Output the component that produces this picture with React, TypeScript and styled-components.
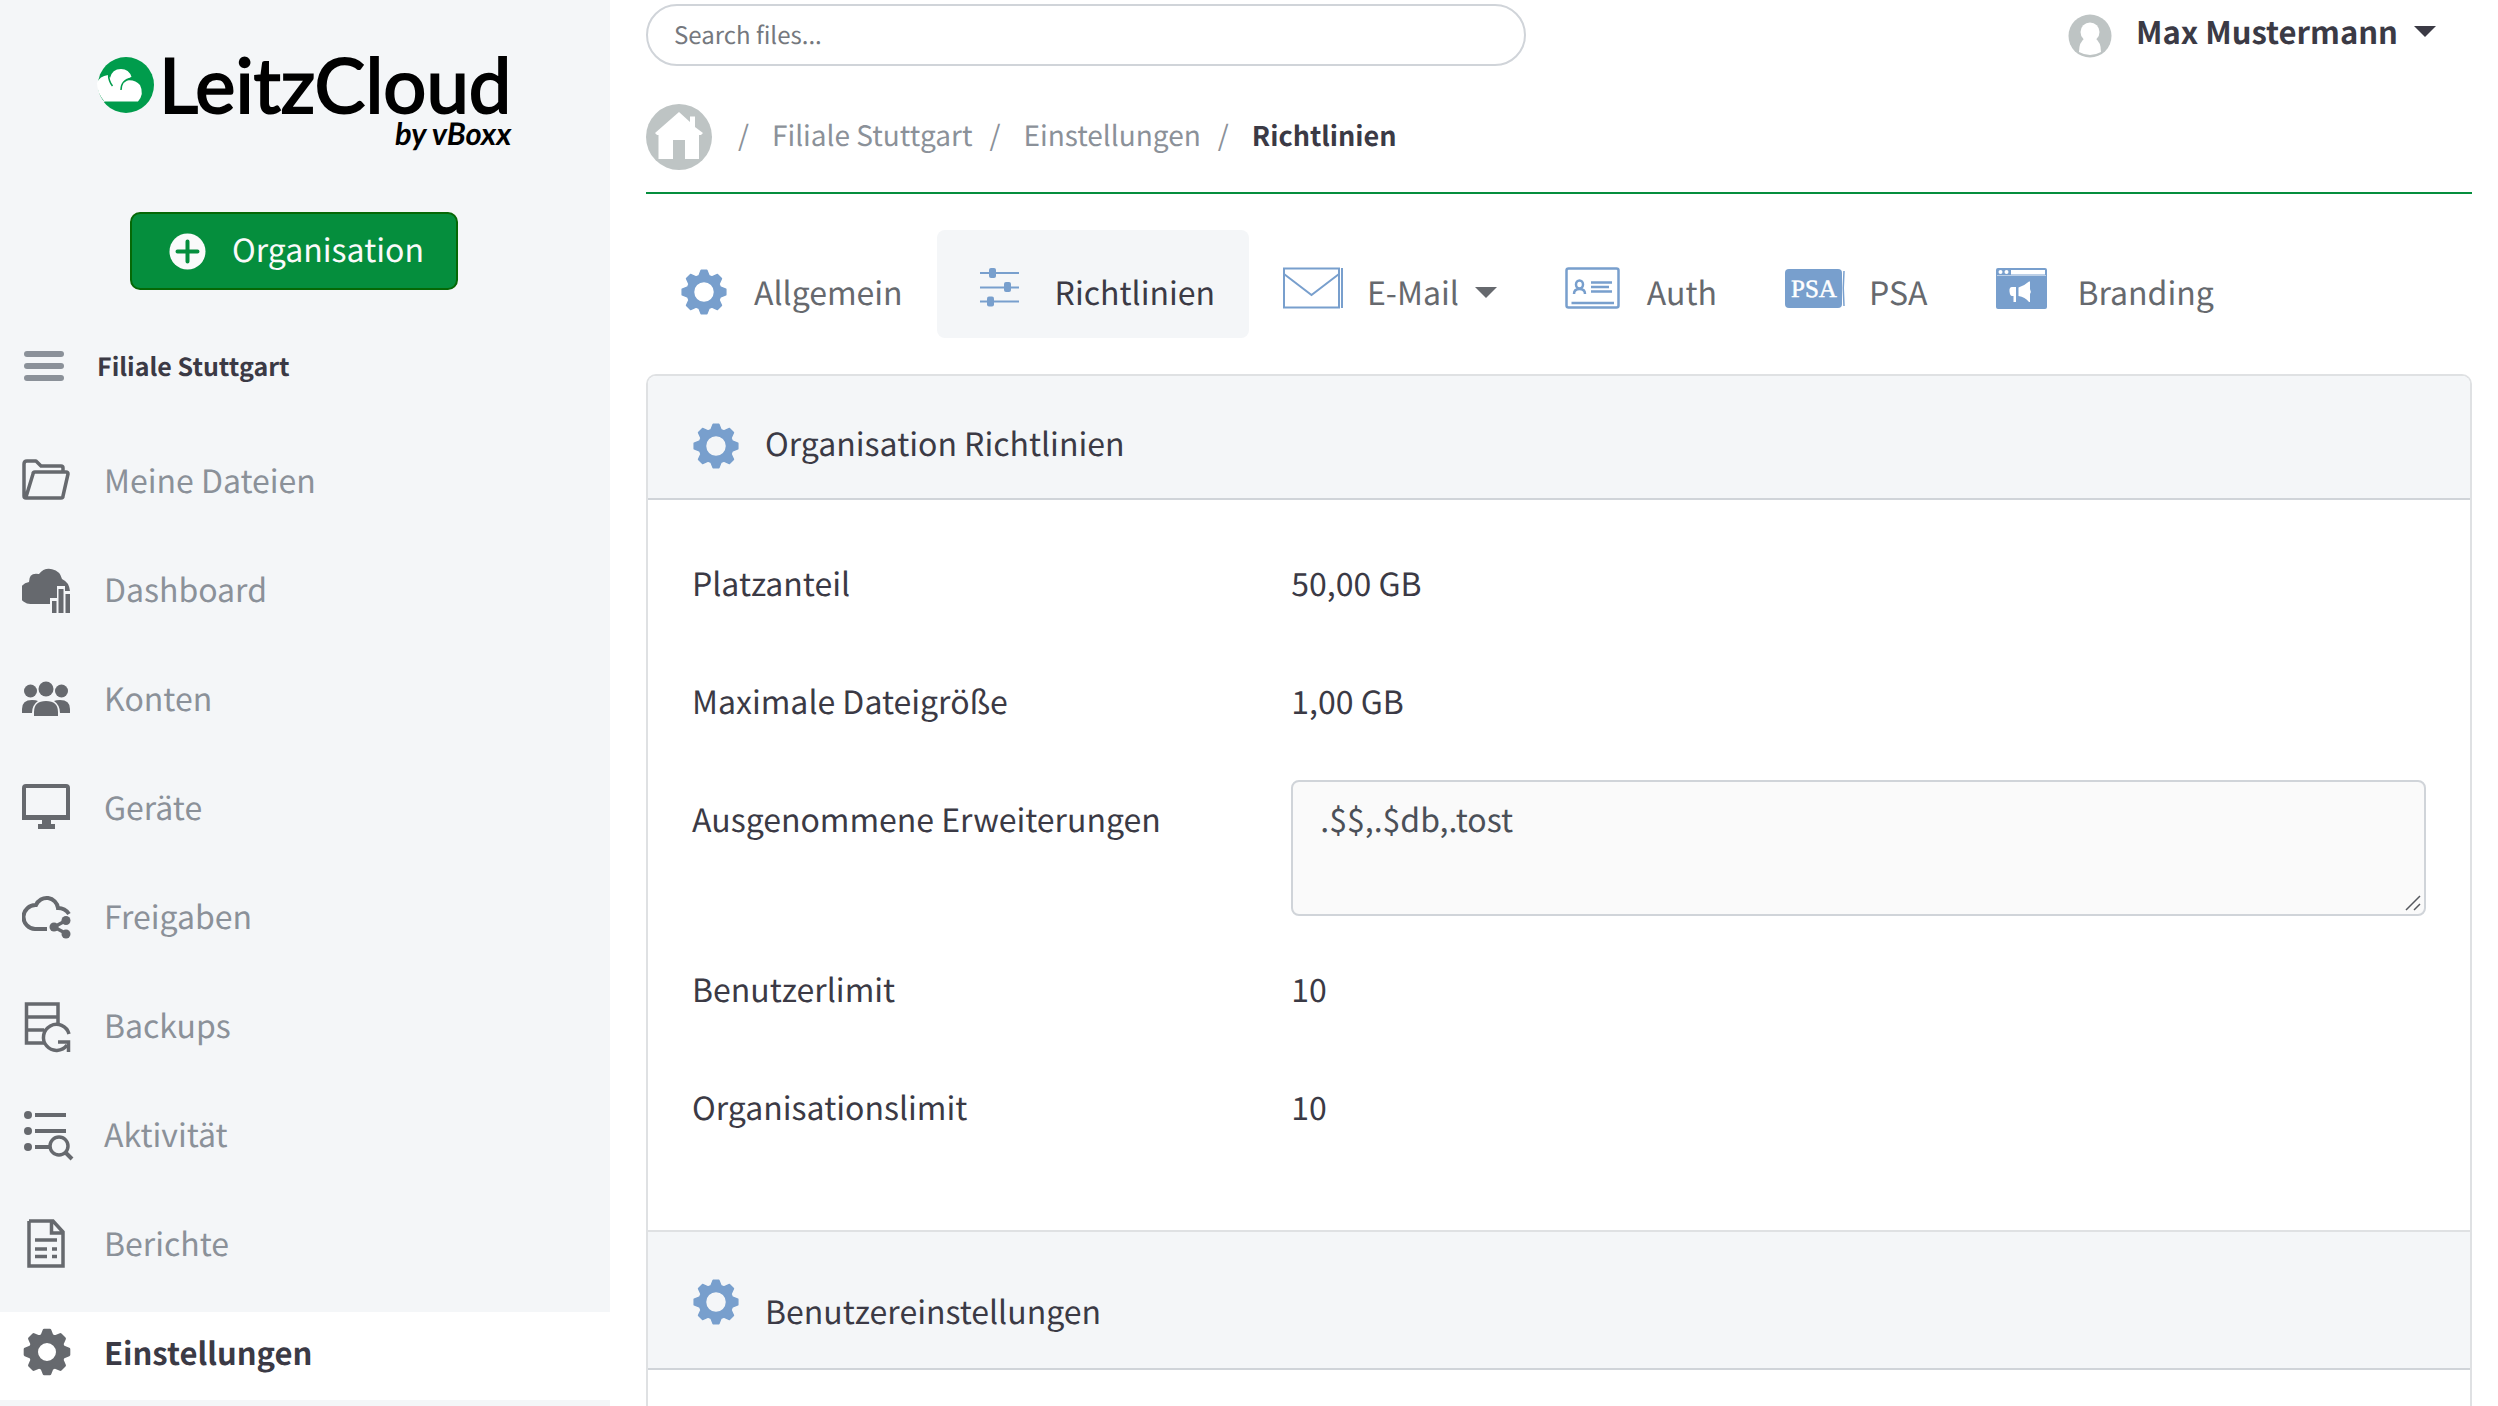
import React from 'react';
import styled, { createGlobalStyle, css } from 'styled-components';

const ink = '#3b3a45';
const muted = '#8b9199';
const slate = '#66696e';
const blue = '#789fcd';
const green = '#058e3d';
const tint = '#f4f6f8';
const line = '#d0d4d9';

const Global = createGlobalStyle`
  *, *::before, *::after { box-sizing: border-box; }
  body {
    margin: 0;
    background: #fff;
    color: ${ink};
    font-family: "Noto Sans CJK SC", "Noto Sans", sans-serif;
    font-size: 32px;
    line-height: 48px;
    text-rendering: geometricPrecision;
  }
  a { color: inherit; text-decoration: none; }
  button, input, textarea { font: inherit; color: inherit; text-rendering: inherit; }
`;

const Shell = styled.div`
  display: flex;
  height: 100vh;
  overflow: hidden;
`;

const Sidebar = styled.aside`
  flex: 0 0 610px;
  display: flex;
  flex-direction: column;
  background: ${tint};
`;

const Logo = styled.a`
  display: flex;
  align-items: flex-start;
  gap: 4px;
  height: 108px;
  margin: 48px 0 0 97px;
  color: #000;
  font-family: Lato, sans-serif;
  svg { flex: none; margin-top: 8px; }
`;

const Wordmark = styled.span`
  display: flex;
  flex-direction: column;
  align-items: flex-end;
`;

const Brand = styled.span`
  font-size: 76px;
  line-height: 74px;
  -webkit-text-stroke: 2px #000;
`;

const Byline = styled.span`
  font-size: 31px;
  font-weight: 700;
  font-style: italic;
  line-height: 22px;
`;

const CreateButton = styled.button`
  display: flex;
  align-items: center;
  align-self: flex-start;
  gap: 26px;
  width: 328px;
  height: 78px;
  margin: 56px 0 0 130px;
  padding: 0 37px;
  border: 2px solid #066806;
  border-radius: 10px;
  background: ${green};
  color: #fafafa;
  text-align: left;
  svg { flex: none; }
  span { padding-bottom: 4px; }
`;

const OrgRow = styled.div`
  display: flex;
  align-items: center;
  gap: 33px;
  height: 48px;
  margin: 52px 0 0 24px;
  font-size: 25px;
  font-weight: 700;
`;

const MenuButton = styled.button`
  display: flex;
  flex-direction: column;
  gap: 6px;
  padding: 0;
  border: 0;
  background: none;
  span { width: 40px; height: 6px; border-radius: 3px; background: ${muted}; }
`;

const NavList = styled.ul`
  display: flex;
  flex-direction: column;
  gap: 21px;
  margin: 50px 0 0;
  padding: 0;
  list-style: none;
`;

const NavLink = styled.a<{ $active?: boolean }>`
  display: flex;
  align-items: center;
  gap: 29px;
  height: 88px;
  padding: 0 22px 8px;
  color: ${muted};
  svg { flex: none; color: ${slate}; }
  ${(p) => p.$active && css`
    background: #fff;
    color: ${ink};
    font-size: 31px;
    font-weight: 700;
  `}
`;

const Main = styled.main`
  flex: 1;
  min-width: 0;
  display: flex;
  flex-direction: column;
  padding: 4px 26px 0 36px;
`;

const TopBar = styled.header`
  display: flex;
  justify-content: space-between;
  align-items: flex-start;
`;

const SearchInput = styled.input`
  width: 880px;
  height: 62px;
  padding: 0 26px 4px;
  border: 2px solid ${line};
  border-radius: 31px;
  background: #fff;
  font-size: 24px;
  &::placeholder { color: #75787e; opacity: 1; }
`;

const UserButton = styled.button`
  display: flex;
  align-items: center;
  padding: 0 36px 0 0;
  border: 0;
  background: none;
  font-size: 31px;
  font-weight: 700;
  svg { flex: none; margin: 10px 24px 0 0; }
`;

const Caret = styled.span`
  width: 0;
  height: 0;
  margin-left: 16px;
  border: 11px solid transparent;
  border-top-color: currentColor;
  border-bottom: 0;
`;

const Crumbs = styled.nav`
  margin-top: 38px;
  padding-bottom: 22px;
  border-bottom: 2px solid ${green};
  color: ${muted};
  font-size: 28px;
  ol {
    display: flex;
    align-items: center;
    margin: 0;
    padding: 0;
    list-style: none;
  }
  li { display: flex; align-items: center; }
  li + li { padding-bottom: 4px; }
  li + li::before { content: "/"; width: 34px; margin-left: 17px; }
  li:nth-child(2)::before { margin-left: 26px; }
  strong { color: ${ink}; font-size: 27px; }
`;

const Tabs = styled.nav`
  display: flex;
  margin: 36px 0;
`;

const Tab = styled.a<{ $active?: boolean }>`
  display: flex;
  align-items: center;
  gap: 24px;
  height: 108px;
  padding: 16px 34px 0;
  border-radius: 8px;
  background: ${(p) => (p.$active ? tint : 'transparent')};
  color: ${(p) => (p.$active ? ink : slate)};
  svg { flex: none; margin-bottom: 6px; }
`;

const TabText = styled.span`
  display: flex;
  align-items: center;
`;

const Card = styled.div`
  flex: 1;
  border: 2px solid #dfe1e3;
  border-bottom: 0;
  border-radius: 10px 10px 0 0;
`;

const SectionHead = styled.h2<{ $tall?: boolean }>`
  display: flex;
  align-items: flex-start;
  gap: 25px;
  margin: 0;
  padding: ${(p) => (p.$tall ? '46px 44px 33px' : '43px 44px 28px')};
  border-top: ${(p) => (p.$tall ? '2px solid #dfe1e3' : '0')};
  border-bottom: 2px solid ${line};
  border-radius: ${(p) => (p.$tall ? '0' : '8px 8px 0 0')};
  background: ${tint};
  font-size: 32px;
  font-weight: 400;
  svg { flex: none; margin-top: ${(p) => (p.$tall ? '0' : '3px')}; }
  span { padding-top: ${(p) => (p.$tall ? '9px' : '0')}; }
`;

const SectionBody = styled.div`
  display: flex;
  flex-direction: column;
  gap: 34px;
  padding: 44px 12px 78px;
`;

const Row = styled.div`
  display: grid;
  grid-template-columns: 1fr 2fr;
  min-height: 84px;
`;

const RowLabel = styled.label`
  padding: 15px 32px 0;
`;

const RowValue = styled.output`
  padding: 15px 32px 0;
`;

const Field = styled.div`
  position: relative;
  margin: 0 32px;
`;

const TextArea = styled.textarea`
  display: block;
  width: 100%;
  height: 136px;
  padding: 13px 27px;
  border: 2px solid ${line};
  border-radius: 8px;
  background: #fafafa;
  color: #4b5058;
  line-height: 48px;
  resize: vertical;
  &::-webkit-resizer { background: transparent; }
`;

const Grip = styled.svg`
  position: absolute;
  right: 5px;
  bottom: 5px;
  pointer-events: none;
`;

const gearPath = (() => {
  const pts: string[] = [];
  const teeth = 8;
  for (let i = 0; i < teeth; i++) {
    const a = (i * 2 * Math.PI) / teeth - Math.PI / 2;
    [[-0.3, 17], [-0.13, 22], [0.13, 22], [0.3, 17]].forEach(([d, r]) => {
      pts.push(`${(24 + r * Math.cos(a + d)).toFixed(2)} ${(24 + r * Math.sin(a + d)).toFixed(2)}`);
    });
  }
  return `M${pts.join('L')}ZM34.5 24a10.5 10.5 0 1 0-21 0a10.5 10.5 0 1 0 21 0Z`;
})();

const Gear = () => (
  <svg width="48" height="48" viewBox="0 0 48 48" aria-hidden="true">
    <path d={gearPath} fill={blue} stroke={blue} strokeWidth="1.5" strokeLinejoin="round" fillRule="evenodd" />
  </svg>
);

const NavSvg = ({ children }: { children: React.ReactNode }) => (
  <svg width="53" height="60" viewBox="0 0 53 60" fill="none" stroke="currentColor" strokeWidth="4" aria-hidden="true">
    {children}
  </svg>
);

const navItems = [
  {
    label: 'Meine Dateien',
    icon: (
      <NavSvg>
        <path d="M2 46V14q0-3 3-3h9l5 5h20q2 0 2 2v4M2 46q0 2 2 2h35q2 0 2-2l5-22q0-2-2-2H13q-2 0-2 2L4 47" strokeWidth="3.5" strokeLinejoin="round" />
      </NavSvg>
    ),
  },
  {
    label: 'Dashboard',
    icon: (
      <NavSvg>
        <path d="M10 45A11 11 0 0 1 7 23Q7 13 17 15A13 13 0 0 1 40 20Q47 23 48 32H43V27H35V39H28V45Z" fill="currentColor" stroke="none" />
        <path d="M30 42h4.500v12H30zM36.500 30h5v24h-5zM43.500 35H48v19h-4.500z" fill="currentColor" stroke="none" />
      </NavSvg>
    ),
  },
  {
    label: 'Konten',
    icon: (
      <NavSvg>
        <g fill="currentColor" stroke="none">
          <circle cx="24" cy="21" r="7.500" />
          <circle cx="8.500" cy="23" r="6.500" />
          <circle cx="39.500" cy="23" r="6.500" />
          <path d="M12 48V44q0-11 12-11t12 11v4zM0 45v-4q0-9 10-9 4 0 6 1-6 4-6 12zM48 45v-4q0-9-10-9-4 0-6 1 6 4 6 12z" />
        </g>
      </NavSvg>
    ),
  },
  {
    label: 'Geräte',
    icon: (
      <NavSvg>
        <rect x="2" y="9" width="44" height="32" rx="2" />
        <path d="M0 40.500h48" strokeWidth="5" />
        <path d="M20 42h9v5h4v5H16v-5h4z" fill="currentColor" stroke="none" />
      </NavSvg>
    ),
  },
  {
    label: 'Freigaben',
    icon: (
      <NavSvg>
        <path d="M25 43H13A11.500 11.500 0 0 1 14 19A11.500 11.500 0 0 1 36 22Q43 22 47 28" />
        <path d="M45 34L32 41L45 48" strokeWidth="3.5" />
        <g fill="currentColor" stroke="none"><circle cx="44" cy="34.500" r="4.500" /><circle cx="32" cy="41" r="4.500" /><circle cx="44" cy="48" r="4.500" /></g>
      </NavSvg>
    ),
  },
  {
    label: 'Backups',
    icon: (
      <NavSvg>
        <path d="M23 48H4.500V9H36V29M4.500 22H36M4.500 35H22" strokeWidth="3.5" />
        <path d="M47 39A13 13 0 1 0 45 50M36 47H46.500V57" strokeWidth="3.500" />
      </NavSvg>
    ),
  },
  {
    label: 'Aktivität',
    icon: (
      <NavSvg>
        <path d="M13 11H44M13 27H44M13 43H28" />
        <circle cx="37" cy="42" r="9" strokeWidth="3.500" />
        <path d="M43 48L50 55" />
        <g fill="currentColor" stroke="none"><circle cx="6" cy="11" r="4" /><circle cx="6" cy="27" r="4" /><circle cx="6" cy="43" r="4" /></g>
      </NavSvg>
    ),
  },
  {
    label: 'Berichte',
    icon: (
      <NavSvg>
        <path d="M7 8V53H41V19L31 8H7M29.500 8V20H41" strokeWidth="3.500" />
        <path d="M13 27H35M13 36H25M30 36H35M13 43.500H25M30 43.500H35" strokeWidth="3.500" />
      </NavSvg>
    ),
  },
];

const Megaphone = () => (
  <svg width="58" height="44" viewBox="0 0 58 44" aria-hidden="true">
    <rect x="1" y="1" width="51" height="41" rx="2" fill={blue} />
    <g fill="#fff">
      <circle cx="5.500" cy="5" r="2" /><circle cx="11.500" cy="5" r="2" />
      <rect x="16" y="3" width="34" height="4.500" />
      <rect x="2" y="8" width="49" height="1" opacity="0.5" />
      <path d="M17 20q-3 0-2.500 4.500t2.500 4.500h1.500v6H21V20zM23.500 20.500Q29 19 34 14.500h1V22q1.500 2.500 0 5v8h-1q-4-5-10.500-6z" />
    </g>
  </svg>
);

export default function App() {
  return (
    <>
      <Global />
      <Shell>
        <Sidebar>
          <Logo href="#" aria-label="LeitzCloud by vBoxx">
            <svg width="58" height="58" viewBox="0 0 58 58" aria-hidden="true">
              <circle cx="29" cy="29" r="28" fill="#009c4c" />
              <path d="M7.500 45.500A28.500 28.500 0 0 1 0 27Q2.500 20 11 19L13 22Q15 13 24 13Q32 13 34.500 21Q31 22 29 24.500Q38 23 43 29Q47.500 38 41 45.500Z" fill="#fff" />
              <path d="M11.500 18Q11.500 25 15.500 30M35 22Q24 24 24 34" fill="none" stroke="#009c4c" strokeWidth="1.500" />
              <path d="M0 26Q-1 38 8 46L4 46Q-2 38 0 26Z" fill={tint} />
            </svg>
            <Wordmark>
              <Brand>LeitzCloud</Brand>
              <Byline>by vBoxx</Byline>
            </Wordmark>
          </Logo>
          <CreateButton type="button">
            <svg width="37" height="37" viewBox="0 0 37 37" aria-hidden="true">
              <circle cx="18.500" cy="18.500" r="18" fill="#fafafa" />
              <path d="M18.500 8.500v20M8.500 18.500h20" stroke={green} strokeWidth="4" strokeLinecap="round" />
            </svg>
            <span>Organisation</span>
          </CreateButton>
          <OrgRow>
            <MenuButton type="button" aria-label="Menü"><span /><span /><span /></MenuButton>
            Filiale Stuttgart
          </OrgRow>
          <nav aria-label="Hauptmenü">
            <NavList>
              {navItems.map((n) => (
                <li key={n.label}><NavLink href="#">{n.icon}{n.label}</NavLink></li>
              ))}
              <li>
                <NavLink href="#" $active aria-current="page">
                  <svg width="53" height="50" viewBox="-1 -1 53 50" aria-hidden="true">
                    <path d={gearPath} fill={slate} stroke={slate} strokeWidth="3" strokeLinejoin="round" fillRule="evenodd" />
                  </svg>
                  Einstellungen
                </NavLink>
              </li>
            </NavList>
          </nav>
        </Sidebar>

        <Main>
          <TopBar>
            <SearchInput type="search" placeholder="Search files..." aria-label="Search files" />
            <UserButton type="button">
              <svg width="44" height="44" viewBox="0 0 44 44" aria-hidden="true">
                <circle cx="22" cy="22" r="21.500" fill="#bec4c4" />
                <circle cx="22" cy="18" r="9.500" fill="#fff" />
                <path d="M17 24h10q6 4 6 14-11 6-22 0 0-10 6-14z" fill="#fff" />
              </svg>
              Max Mustermann
              <Caret />
            </UserButton>
          </TopBar>

          <Crumbs aria-label="Brotkrumen">
            <ol>
              <li>
                <a href="#" aria-label="Start">
                  <svg width="66" height="66" viewBox="0 0 66 66" display="block" aria-hidden="true">
                    <circle cx="33" cy="33" r="33" fill="#bec4c4" />
                    <path d="M33 8L44 18V12.500H49V23L57 29L55 31H53V55H39V36H27V55H12.500V31H11L9 29Z" fill="#fff" />
                  </svg>
                </a>
              </li>
              <li><a href="#">Filiale Stuttgart</a></li>
              <li><a href="#">Einstellungen</a></li>
              <li><strong aria-current="page">Richtlinien</strong></li>
            </ol>
          </Crumbs>

          <Tabs aria-label="Einstellungen">
            <Tab href="#">
              <svg width="50" height="56" viewBox="0 -7 50 56" aria-hidden="true">
                <path d={gearPath} fill={blue} stroke={blue} strokeWidth="1.5" strokeLinejoin="round" fillRule="evenodd" />
              </svg>
              Allgemein
            </Tab>
            <Tab href="#" $active aria-current="page">
              <svg width="60" height="44" viewBox="0 0 60 44" aria-hidden="true">
                <path d="M9 6H48M9 20.500H48M9 34.500H48" stroke={blue} strokeWidth="2" />
                <g fill={blue}>
                  <rect x="18" y="1" width="7" height="10" rx="2" />
                  <rect x="33" y="15" width="7" height="10" rx="2" />
                  <rect x="16" y="29.500" width="7" height="10" rx="2" />
                </g>
              </svg>
              Richtlinien
            </Tab>
            <Tab href="#">
              <svg width="60" height="44" viewBox="0 0 60 44" fill="none" stroke={blue} strokeWidth="2" aria-hidden="true">
                <path d="M1 1.500H56V40.500H1ZM1 7L28.500 28L56 7M59 1V41" />
              </svg>
              <TabText>E-Mail<Caret /></TabText>
            </Tab>
            <Tab href="#">
              <svg width="58" height="44" viewBox="0 0 58 44" fill="none" stroke={blue} strokeWidth="2.500" aria-hidden="true">
                <rect x="1.500" y="1.500" width="52" height="39" rx="2" />
                <path d="M26 15.500H47M26 20H44M26 24.500H47M6.500 36H49" />
                <ellipse cx="14.500" cy="17.500" rx="3.500" ry="4" />
                <path d="M9 27q0-5 5.500-5t5.500 5" />
              </svg>
              Auth
            </Tab>
            <Tab href="#">
              <svg width="60" height="44" viewBox="0 0 60 44" aria-hidden="true">
                <rect x="0" y="2" width="57" height="39" rx="4" fill={blue} />
                <path d="M59 4Q57.500 21 59 39" fill="none" stroke={blue} strokeWidth="1.500" />
                <text x="29" y="30" textAnchor="middle" fontFamily="Liberation Serif, serif" fontSize="25" fill="#fff" stroke="#fff" strokeWidth="0.500">PSA</text>
              </svg>
              PSA
            </Tab>
            <Tab href="#"><Megaphone />Branding</Tab>
          </Tabs>

          <Card>
            <section>
              <SectionHead><Gear /><span>Organisation Richtlinien</span></SectionHead>
              <SectionBody>
                <Row><RowLabel htmlFor="space">Platzanteil</RowLabel><RowValue id="space">50,00 GB</RowValue></Row>
                <Row><RowLabel htmlFor="size">Maximale Dateigröße</RowLabel><RowValue id="size">1,00 GB</RowValue></Row>
                <Row>
                  <RowLabel htmlFor="ext">Ausgenommene Erweiterungen</RowLabel>
                  <Field>
                    <TextArea id="ext" defaultValue=".$$,.$db,.tost" />
                    <Grip width="16" height="16" viewBox="0 0 16 16" stroke="#55585e" strokeWidth="1.500" aria-hidden="true">
                      <path d="M1 15L15 1M9 15L15 9" />
                    </Grip>
                  </Field>
                </Row>
                <Row><RowLabel htmlFor="users">Benutzerlimit</RowLabel><RowValue id="users">10</RowValue></Row>
                <Row><RowLabel htmlFor="orgs">Organisationslimit</RowLabel><RowValue id="orgs">10</RowValue></Row>
              </SectionBody>
            </section>
            <section>
              <SectionHead $tall><Gear /><span>Benutzereinstellungen</span></SectionHead>
            </section>
          </Card>
        </Main>
      </Shell>
    </>
  );
}
